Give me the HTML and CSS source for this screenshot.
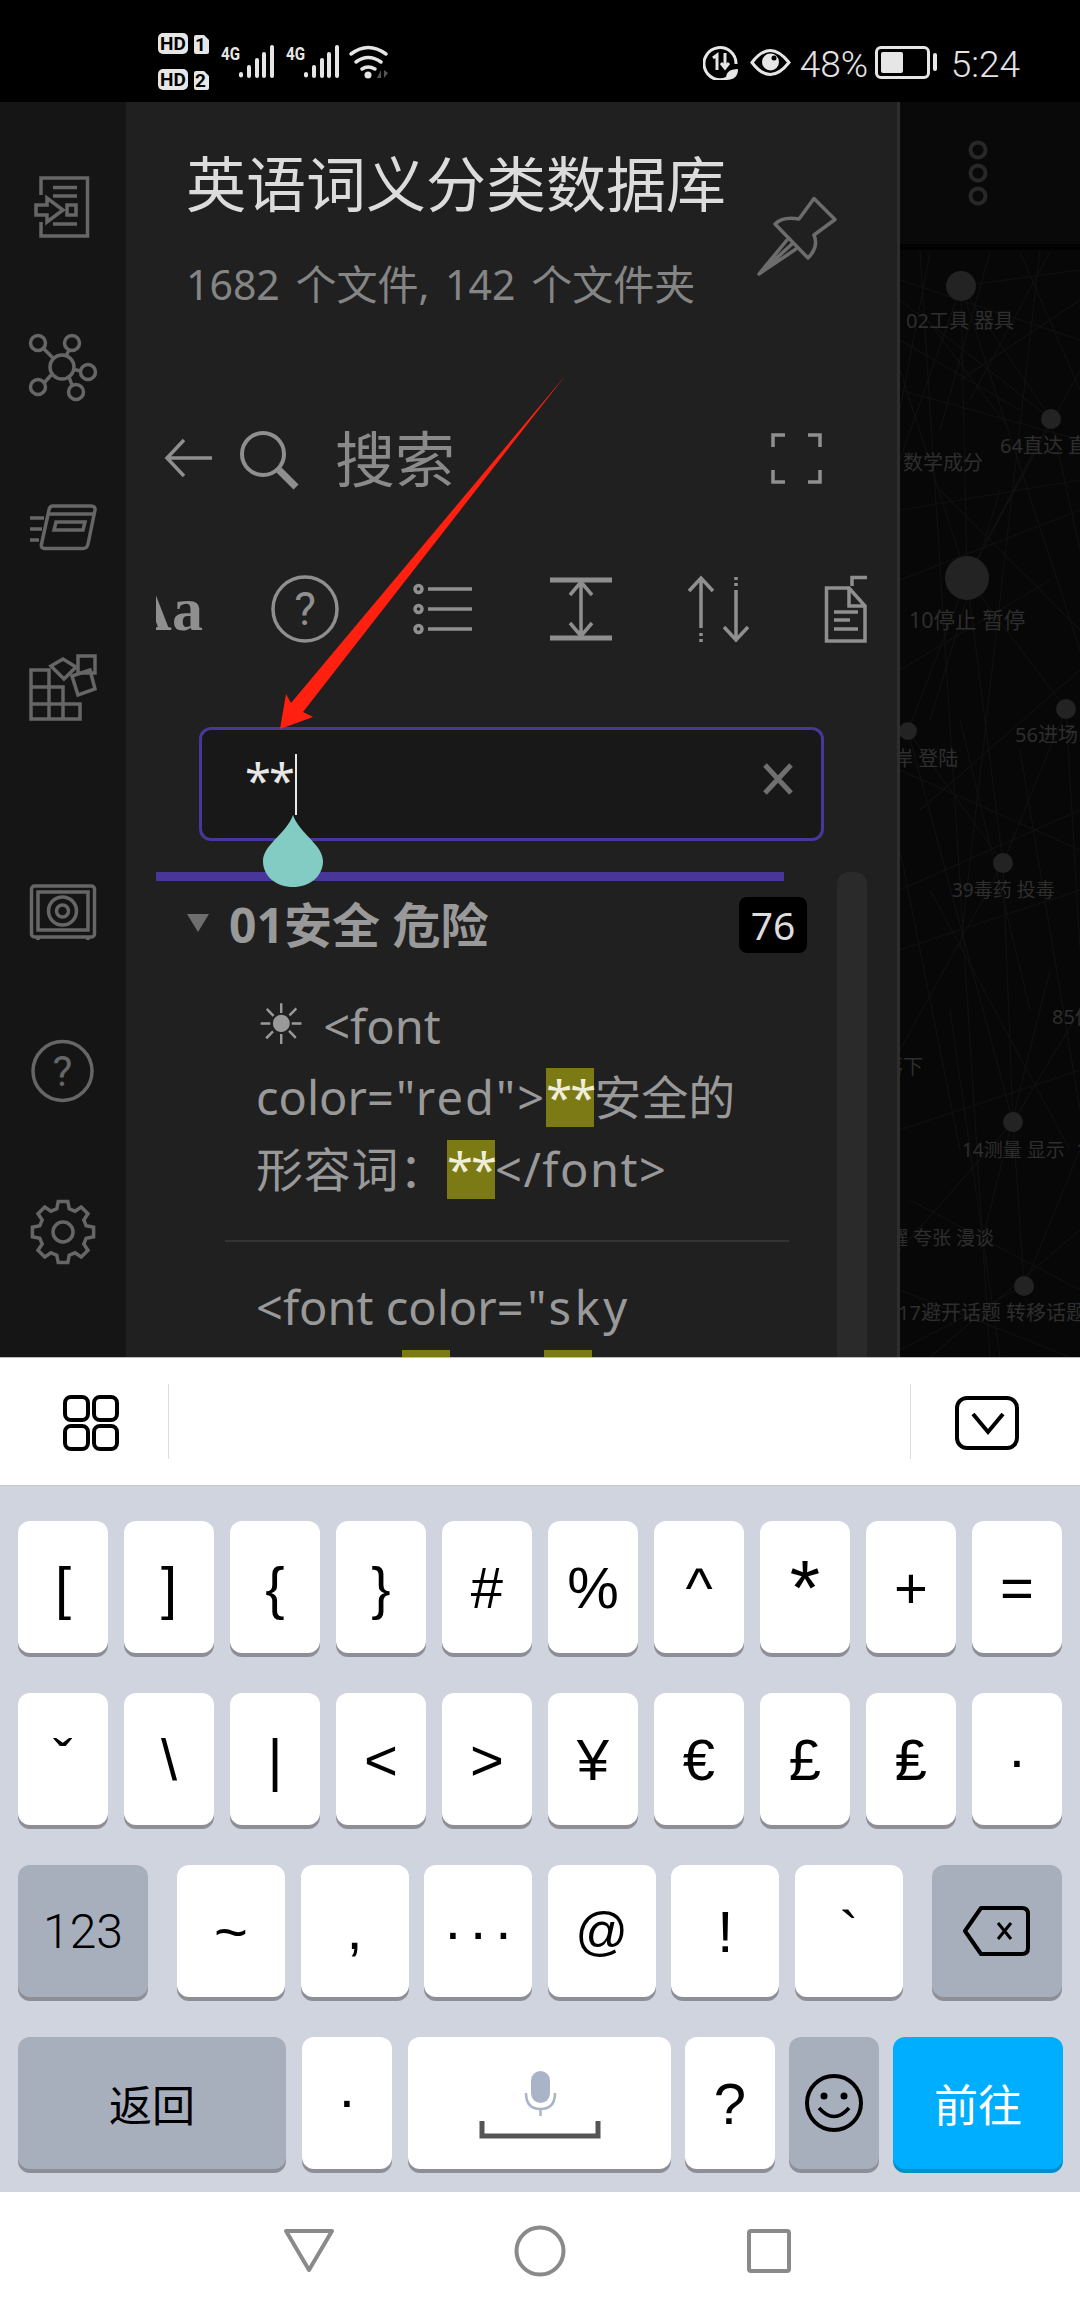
FILE: index.html
```html
<!DOCTYPE html>
<html lang="zh">
<head>
<meta charset="utf-8">
<title>英语词义分类数据库</title>
<link rel="stylesheet" href="styles.css">
</head>
<body>
<div class="phone">
  <header class="status">
    <svg class="st-left" viewBox="150 30 250 64" width="250" height="64">
      <g fill="#e6e6e6">
        <rect x="158" y="33" width="30" height="21" rx="5"/>
        <rect x="158" y="69" width="30" height="21" rx="5"/>
        <path d="M196 35h8l5 5v12a2 2 0 0 1-2 2h-11a2 2 0 0 1-2-2V37a2 2 0 0 1 2-2z"/>
        <path d="M196 71h8l5 5v12a2 2 0 0 1-2 2h-11a2 2 0 0 1-2-2V73a2 2 0 0 1 2-2z"/>
        <rect x="239" y="72" width="4" height="5.500" rx="2"/><rect x="247" y="65" width="4" height="13" rx="2"/><rect x="255" y="58" width="4" height="20" rx="2"/><rect x="262" y="52" width="4" height="26" rx="2"/><rect x="270" y="45" width="4" height="33" rx="2"/>
        <rect x="304" y="72" width="4" height="5.500" rx="2"/><rect x="312" y="65" width="4" height="13" rx="2"/><rect x="320" y="58" width="4" height="20" rx="2"/><rect x="327" y="52" width="4" height="26" rx="2"/><rect x="335" y="45" width="4" height="33" rx="2"/>
        <circle cx="368" cy="75" r="3.500"/>
      </g>
      <g class="st-tiny">
        <text x="173" y="50" text-anchor="middle" class="st-hd">HD</text>
        <text x="173" y="86" text-anchor="middle" class="st-hd">HD</text>
        <text x="200.500" y="51" text-anchor="middle" class="st-hd">1</text>
        <text x="200.500" y="87" text-anchor="middle" class="st-hd">2</text>
      </g>
      <text x="221" y="60" class="st-4g" textLength="19" lengthAdjust="spacingAndGlyphs">4G</text>
      <text x="286" y="60" class="st-4g" textLength="19" lengthAdjust="spacingAndGlyphs">4G</text>
      <g fill="none" stroke="#e6e6e6" stroke-width="3.500" stroke-linecap="round">
        <path d="M351 54q17-13 35 0"/><path d="M356 62q12-9 25 0"/><path d="M362 69q6-4 13 0"/>
      </g>
      <path d="M377 78l4-8v8zM384 70v8l4-5z" fill="#555"/>
    </svg>
    <div class="st-right">
      <svg viewBox="702 44 35 36" width="35" height="36">
        <path d="M726 78a16 16 0 1 1 9-14" fill="none" stroke="#e6e6e6" stroke-width="3"/>
        <path d="M712 58l4-3v15M724 53v14m-4-4l4 5 4-5" fill="none" stroke="#e6e6e6" stroke-width="3"/>
        <path d="M725 80q-1-11 12-11q0 11-12 11z" fill="#e6e6e6"/>
      </svg>
      <svg class="st-eye" viewBox="749 48 41 27" width="41" height="27">
        <path d="M751 61.500q18-24 37 0q-19 24-37 0z" fill="none" stroke="#e6e6e6" stroke-width="3"/>
        <circle cx="769.500" cy="61" r="8.500" fill="#e6e6e6"/><circle cx="773" cy="57" r="2.500" fill="#000"/>
      </svg>
      <span class="st-text st-pct">48%</span>
      <div class="battery"><div class="battery-fill"></div></div>
      <div class="battery-nub"></div>
      <span class="st-text st-time">5:24</span>
    </div>
  </header>

  <main class="app">
    <nav class="rail">
      <div class="rail-btn"><svg viewBox="30 174 62 66" width="62" height="66" class="ico-rail">
        <path d="M39 195V178H85.500V236H39V222"/><path d="M51 187.500H75M51 196H75M51 224H75"/><rect x="65" y="205" width="9" height="10"/><path d="M34 205H45V198L61 210L45 222V215H34Z"/>
      </svg></div>
      <div class="rail-btn"><svg viewBox="28 332 70 70" width="70" height="70" class="ico-rail">
        <circle cx="62" cy="367" r="12"/><circle cx="38" cy="343" r="7.500"/><circle cx="72" cy="343" r="7.500"/><circle cx="88" cy="372" r="7.500"/><circle cx="76" cy="392" r="7.500"/><circle cx="38" cy="387" r="7.500"/>
        <path d="M44 349L53 358M69 350L66 356M74 369.500L81 371M69 377L72 385M52 374L44 383"/>
      </svg></div>
      <div class="rail-btn"><svg viewBox="28 503 70 50" width="70" height="50" class="ico-rail">
        <path d="M53 507H91Q95.500 507 95 511L88 545Q87 549.500 83 549.500H45Q40.500 549.500 41.500 545L49 511Q49.500 507 53 507Z"/><path d="M49 515H93"/><path d="M56 523H85L83 531H54Z"/><path d="M30 519H44M30 530H42M30 541H39"/>
      </svg></div>
      <div class="rail-btn"><svg viewBox="28 652 70 71" width="70" height="71" class="ico-rail">
        <path d="M31 670H49V719H31ZM31 687H63V719M31 704H80V719H31M63 704V719"/><path d="M51 666L63 659L76 667L64 679Z"/><rect x="78" y="656" width="17" height="17"/><path d="M72 676L90 670L95 689L78 695Z"/>
      </svg></div>
      <div class="rail-gap"></div>
      <div class="rail-btn"><svg viewBox="29 883 68 58" width="68" height="58" class="ico-rail">
        <rect x="31.500" y="886" width="63" height="51" rx="3"/><rect x="38" y="892" width="50" height="38"/><circle cx="62.500" cy="911" r="14"/><circle cx="62.500" cy="911" r="6"/><path d="M38 938V940M88 938V940"/>
      </svg></div>
      <div class="rail-btn"><svg viewBox="30 1040 66 66" width="66" height="66" class="ico-rail">
        <circle cx="62.500" cy="1072" r="29.500"/><text x="62.500" y="1087" text-anchor="middle" class="ico-q">?</text>
      </svg></div>
      <div class="rail-btn"><svg viewBox="-33 -33 66 66" width="66" height="66" class="ico-rail">
        <polygon points="-6.200,-23.200 -4.800,-30.600 4.800,-30.600 6.200,-23.200 12,-20.800 18.200,-25 25,-18.200 20.800,-12 23.200,-6.200 30.600,-4.800 30.600,4.800 23.200,6.200 20.800,12 25,18.200 18.200,25 12,20.800 6.200,23.200 4.800,30.600 -4.800,30.600 -6.200,23.200 -12,20.800 -18.200,25 -25,18.200 -20.800,12 -23.200,6.200 -30.600,4.800 -30.600,-4.800 -23.200,-6.200 -20.800,-12 -25,-18.200 -18.200,-25 -12,-20.800"/><circle r="10"/>
      </svg></div>
    </nav>

    <section class="panel">
      <div class="vault">
        <div class="vault-text">
          <h1 class="vault-title">英语词义分类数据库</h1>
          <p class="vault-sub">1682 个文件, 142 个文件夹</p>
        </div>
        <svg class="pin" viewBox="758 193 82 82" width="82" height="82">
          <g fill="none" stroke="#6c6c6c" stroke-width="3.500" stroke-linejoin="round" stroke-linecap="round">
            <path d="M815 196.500L836 217.500L815 233Q820 245 809 256L776 222Q784 214 800 217Z"/>
            <path d="M788 238L760 272L797 247M793 242L760 272"/>
          </g>
        </svg>
      </div>

      <div class="search-head">
        <svg viewBox="163 436 52 44" width="52" height="44" class="ico-tool"><path d="M212 458H168M184 440L167 458L184 476"/></svg>
        <svg class="search-glass ico-tool" viewBox="236 426 64 64" width="64" height="64"><circle cx="263" cy="454" r="21" stroke-width="4"/><path d="M279 470L296 487" stroke-width="7"/></svg>
        <span class="search-label">搜索</span>
        <svg class="search-expand ico-tool" viewBox="770 431 55 55" width="55" height="55"><path d="M774 447V435H786M809 435H821V447M821 470V482H809M786 482H774V470"/></svg>
      </div>

      <div class="tools">
        <div class="tool tool-aa"><span class="aa">Aa</span></div>
        <div class="tool"><svg viewBox="270 574 70 70" width="70" height="70" class="ico-tool"><circle cx="305" cy="609" r="32"/><text x="305" y="625" text-anchor="middle" class="tool-q">?</text></svg></div>
        <div class="tool"><svg viewBox="410 580 66 58" width="66" height="58" class="ico-tool"><circle cx="418.500" cy="589" r="3.500"/><circle cx="418.500" cy="609" r="3.500"/><circle cx="418.500" cy="629" r="3.500"/><path d="M428 589H472M428 609H472M428 629H472"/></svg></div>
        <div class="tool"><svg viewBox="548 576 66 66" width="66" height="66" class="ico-tool"><path d="M550 580H612M550 638H612" stroke-width="5"/><path d="M581 582V636M570 595L581 582L592 595M570 623L581 636L592 623"/></svg></div>
        <div class="tool"><svg viewBox="686 574 66 70" width="66" height="70" class="ico-tool"><path d="M701 578V628M689 591L701 578L713 591M736 590V640M724 627L736 640L748 627M701 633V636M701 639V642M736 577V580M736 583V586"/></svg></div>
        <div class="tool"><svg viewBox="821 574 70 70" width="70" height="70" class="ico-tool"><path d="M825.500 588H848L864 606V641H825.500ZM848 588V606H864"/><path d="M833 612H857M833 620H849M833 629H857"/><path d="M851 586V577.500H867"/></svg></div>
      </div>

      <div class="query">
        <span class="query-text">**</span><span class="caret"></span>
        <svg class="handle" viewBox="0 0 60 72" width="60" height="72"><path d="M30 0C36 18 60 30 60 46C60 62 46 72 30 72C14 72 0 62 0 46C0 30 24 18 30 0Z" fill="#82ccc4"/></svg>
        <svg class="query-clear" viewBox="0 0 32 32" width="32" height="32"><path d="M3 2L29 30M29 2L3 30" fill="none" stroke="#707070" stroke-width="5"/></svg>
      </div>

      <div class="results">
        <div class="results-list">
          <div class="progress"></div>
          <div class="group-head">
            <span class="tri"></span>
            <span class="group-name">01安全 危险</span>
            <span class="badge">76</span>
          </div>
          <div class="match">
            <div class="match-line"><span class="sun">☀</span>&lt;font</div>
            <div class="match-line">color<span class="attr">="red"&gt;</span><mark class="hit">**</mark>安全的</div>
            <div class="match-line"><span class="cjk-wide">形容词：</span><mark class="hit">**</mark><span class="tag-wide">&lt;/font&gt;</span></div>
          </div>
          <div class="divider"></div>
          <div class="match match-next">
            <div class="match-line">&lt;font color<span class="attr-sky">="sky</span></div>
            <div class="match-line">blue"&gt;<mark class="hit hit-gap">**</mark>例句<mark class="hit">**</mark></div>
          </div>
        </div>
        <div class="scrollbar"></div>
      </div>
    </section>

    <aside class="graph-pane">
      <div class="graph-top">
        <svg viewBox="0 0 24 72" width="24" height="72"><g fill="none" stroke="#282828" stroke-width="4"><circle cx="12" cy="12" r="7.500"/><circle cx="12" cy="35" r="7.500"/><circle cx="12" cy="58" r="7.500"/></g></svg>
      </div>
      <div class="graph">
        <svg class="graph-lines" viewBox="0 0 180 1107" width="180" height="1107">
          <g stroke="#101010" stroke-width="1.200">
            <path d="M61 36L151 169M61 36L67 328M61 36L0 210M61 36L180 20M151 169L67 328M151 169L180 300M67 328L166 459M67 328L8 481M67 328L103 613M67 328L0 120M166 459L103 613M166 459L180 700M8 481L103 613M8 481L113 872M103 613L113 872M103 613L0 800M113 872L124 1036M113 872L180 760M113 872L0 1000M124 1036L0 1100M124 1036L180 900M151 169L0 50M61 36L180 400M67 328L180 120M0 640L180 560M20 0L90 1107M140 0L60 700M180 980L30 1107"/>
            <path d="M0 30L180 90M30 2L0 160M90 2L40 180M120 2L180 140M0 90L120 160M180 50L60 130M0 140L180 190M70 150L150 2M20 60L110 180M180 230L0 260M0 330L180 260M40 240L180 380M0 420L150 330M100 240L30 470M180 420L20 560M0 520L180 600M60 470L130 760M180 640L0 700M30 640L170 900M0 880L180 820M50 760L100 1107M180 1040L10 950M0 1040L170 1107M150 720L80 1000M0 600L60 900M120 500L180 860"/>
          </g>
        </svg>
        <i class="node" style="left:46px;top:21px;width:30px"></i>
        <i class="node" style="left:141px;top:159px;width:20px"></i>
        <i class="node" style="left:45px;top:306px;width:44px"></i>
        <i class="node" style="left:156px;top:449px;width:20px"></i>
        <i class="node" style="left:-1px;top:472px;width:18px"></i>
        <i class="node" style="left:93px;top:603px;width:20px"></i>
        <i class="node" style="left:103px;top:862px;width:20px"></i>
        <i class="node" style="left:114px;top:1026px;width:20px"></i>
        <span class="glabel" style="left:6px;top:58px">02工具 器具</span>
        <span class="glabel" style="left:100px;top:183px">64直达 直达</span>
        <span class="glabel" style="left:3px;top:200px">数学成分</span>
        <span class="glabel glabel-lg" style="left:9px;top:357px">10停止 暂停</span>
        <span class="glabel" style="left:115px;top:472px">56进场</span>
        <span class="glabel" style="left:-27px;top:496px">上岸 登陆</span>
        <span class="glabel glabel-sm" style="left:52px;top:627px">39毒药 投毒</span>
        <span class="glabel" style="left:152px;top:754px">85低</span>
        <span class="glabel" style="left:-17px;top:804px">落下</span>
        <span class="glabel glabel-sm" style="left:62px;top:887px">14测量 显示</span>
        <span class="glabel" style="left:176px;top:887px">1</span>
        <span class="glabel glabel-sm" style="left:-30px;top:975px">炫耀 夸张 漫谈</span>
        <span class="glabel" style="left:-2px;top:1050px">17避开话题 转移话题 转</span>
      </div>
    </aside>
  </main>

  <div class="kb-bar">
    <svg viewBox="63 1395 56 56" width="56" height="56"><g fill="none" stroke="#000" stroke-width="4"><rect x="65" y="1397" width="23" height="23" rx="6"/><rect x="94" y="1397" width="23" height="23" rx="6"/><rect x="65" y="1426" width="23" height="23" rx="6"/><rect x="94" y="1426" width="23" height="23" rx="6"/></g></svg>
    <div class="kb-sep"></div>
    <div class="kb-spacer"></div>
    <div class="kb-sep"></div>
    <svg viewBox="955 1395 65 54" width="65" height="54"><rect x="957" y="1397" width="60" height="50" rx="10" fill="none" stroke="#000" stroke-width="4"/><path d="M973 1413L988 1431L1003 1413" fill="none" stroke="#000" stroke-width="4"/></svg>
  </div>

  <div class="keyboard">
    <div class="kb-row">
      <div class="key">[</div><div class="key">]</div><div class="key">{</div><div class="key">}</div><div class="key">#</div><div class="key">%</div><div class="key">^</div><div class="key key-star">*</div><div class="key">+</div><div class="key">=</div>
    </div>
    <div class="kb-row">
      <div class="key">ˇ</div><div class="key">\</div><div class="key">|</div><div class="key">&lt;</div><div class="key">&gt;</div><div class="key">¥</div><div class="key">€</div><div class="key">£</div><div class="key">₤</div><div class="key">·</div>
    </div>
    <div class="kb-row kb-row3">
      <div class="key key-fn key-side key-num">123</div>
      <div class="key key-mid">~</div><div class="key key-mid key-comma">,</div><div class="key key-mid key-dots">···</div><div class="key key-mid key-at">@</div><div class="key key-mid">!</div><div class="key key-mid">`</div>
      <div class="key key-fn key-side">
        <svg viewBox="962 1908 70 52" width="70" height="52"><path d="M981 1911H1022Q1028 1911 1028 1917V1951Q1028 1957 1022 1957H981L965 1934Z" fill="none" stroke="#000" stroke-width="4" stroke-linejoin="round"/><path d="M998 1926L1011 1942M1011 1926L998 1942" fill="none" stroke="#000" stroke-width="3"/></svg>
      </div>
    </div>
    <div class="kb-row kb-row4">
      <div class="key key-fn key-back">返回</div>
      <div class="key key-dot">·</div>
      <div class="key key-space">
        <svg viewBox="478 2066 124 76" width="124" height="76"><rect x="531" y="2070" width="19" height="32" rx="9.500" fill="#aab4c8"/><path d="M526 2092Q526 2108 540.500 2108Q555 2108 555 2092M540.500 2108V2115" fill="none" stroke="#aab4c8" stroke-width="2.500"/><path d="M482 2120V2135H598V2120" fill="none" stroke="#555" stroke-width="5"/></svg>
      </div>
      <div class="key">?</div>
      <div class="key key-fn">
        <svg viewBox="0 0 60 60" width="60" height="60"><g fill="none" stroke="#000" stroke-width="4"><circle cx="30" cy="30" r="27"/><path d="M15 35Q30 52 45 35" stroke-width="3.500"/></g><circle cx="20" cy="23" r="3.500"/><circle cx="40" cy="23" r="3.500"/></svg>
      </div>
      <div class="key key-go">前往</div>
    </div>
  </div>

  <footer class="navbar">
    <svg viewBox="282 2229 54 46" width="54" height="46"><path d="M286 2232H332L309 2271Z" fill="none" stroke="#8a8a8a" stroke-width="4" stroke-linejoin="round"/></svg>
    <svg viewBox="513 2224 54 54" width="54" height="54"><circle cx="540" cy="2251" r="23.500" fill="none" stroke="#8a8a8a" stroke-width="4"/></svg>
    <svg viewBox="745 2226 48 48" width="48" height="48"><rect x="749" y="2230" width="40" height="40" rx="2" fill="none" stroke="#8a8a8a" stroke-width="4"/></svg>
  </footer>

  <svg class="annotation" viewBox="0 0 1080 2310" width="1080" height="2310">
    <polygon points="565,376 303,712 313,717 280,729 286,694 291,703" fill="#ff2010"/>
  </svg>
</div>
</body>
</html>
```
FILE: styles.css
```css
* { box-sizing: border-box; }
html, body { margin: 0; padding: 0; background: #000; }
body { font-family: "Noto Sans", "Noto Sans CJK SC", sans-serif; }
.phone { position: relative; width: 1080px; height: 2310px; display: flex; flex-direction: column; overflow: hidden; }

/* status bar */
.status { height: 102px; flex: none; background: #000; display: flex; align-items: flex-start; padding: 30px 60px 0 150px; justify-content: space-between; }
.st-hd { font: 700 19px Roboto, sans-serif; fill: #000; }
.st-4g { font: 700 18px Roboto, sans-serif; fill: #e6e6e6; }
.st-right { display: flex; align-items: center; height: 64px; }
.st-right svg { display: block; flex: none; }
.st-eye { margin-left: 12px; }
.st-text { color: #e4e4e4; font: 300 37px/64px Roboto, sans-serif; padding-top: 5px; }
.st-pct { margin-left: 9px; width: 67px; }
.st-time { margin-left: 14px; }
.battery { width: 55px; height: 33px; margin-left: 8px; border: 3px solid #e6e6e6; border-radius: 6px; padding: 3px; }
.battery-fill { width: 22px; height: 21px; background: #e6e6e6; border-radius: 2px; }
.battery-nub { width: 4px; height: 18px; margin-left: 3px; background: #e6e6e6; border-radius: 2px; }

/* app */
.app { height: 1255px; flex: none; display: flex; overflow: hidden; }
.rail { width: 126px; flex: none; background: #151515; padding-top: 25px; display: flex; flex-direction: column; align-items: center; }
.rail-btn { height: 160px; flex: none; display: flex; align-items: center; justify-content: center; }
.rail-gap { height: 65px; flex: none; }
.ico-rail { fill: none; stroke: #666; stroke-width: 3.5; display: block; }
.ico-q { font: 400 42px Roboto, sans-serif; fill: #666; stroke: none; }

.panel { width: 774px; flex: none; background: #202020; border-right: 3px solid #2e2e2e; overflow: hidden; }
.vault { display: flex; justify-content: space-between; padding: 39px 58px 0 60px; height: 215px; }
.vault-title { margin: 0; font: 400 60px/80px "Noto Sans CJK SC", sans-serif; color: #dcdcdc; }
.vault-sub { margin: 33px 0 0; font: 400 41px/60px "Noto Sans", "Noto Sans CJK SC", sans-serif; color: #858585; word-spacing: 5px; }
.pin { margin-top: 54px; flex: none; }

.search-head { display: flex; align-items: center; height: 80px; margin-top: 101px; padding-left: 37px; }
.ico-tool { fill: none; stroke: #8f8f8f; stroke-width: 3.5; display: block; flex: none; }
.search-glass { margin-left: 21px; stroke: #8f8f8f; }
.search-label { margin-left: 35px; padding-bottom: 5px; font: 400 60px/76px "Noto Sans CJK SC", sans-serif; color: #8a8a8a; }
.search-expand { margin-left: 314px; }

.tools { display: flex; height: 78px; width: 711px; margin: 72px 0 0 30px; overflow: hidden; }
.tool { flex: 0 0 138px; display: flex; align-items: center; justify-content: center; height: 78px; }
.tool-aa { margin-left: -60px; margin-right: 2px; }
.aa { font: 700 62px/78px "Liberation Serif", serif; color: #8f8f8f; }
.tool-q { font: 400 46px Roboto, sans-serif; fill: #8f8f8f; stroke: none; }

.query { position: relative; display: flex; align-items: flex-start; width: 625px; height: 114px; margin: 79px 0 0 73px; background: #181818; border: 3px solid #483699; border-radius: 12px; padding: 24px 0 0 43px; z-index: 2; }
.query-text { font: 400 47px/52px "Noto Sans", sans-serif; color: #e8e8e8; letter-spacing: -2px; }
.caret { width: 2px; height: 61px; margin-left: 2px; background: #e8e8e8; }
.handle { position: absolute; left: 61px; top: 85px; }
.query-clear { position: absolute; right: 27px; top: 33px; }

.results { display: flex; margin: 31px 0 0 30px; }
.results-list { width: 681px; flex: none; }
.progress { width: 628px; height: 9px; background: #483699; }
.group-head { display: flex; align-items: center; height: 88px; padding-left: 31px; position: relative; }
.tri { width: 0; height: 0; border-left: 11px solid transparent; border-right: 11px solid transparent; border-top: 18px solid #6e6e6e; margin-top: -4px; }
.group-name { margin-left: 20px; font: 700 48px/60px "Noto Sans", "Noto Sans CJK SC", sans-serif; color: #999; }
.badge { margin-left: auto; margin-right: 30px; width: 68px; height: 56px; background: #000; border-radius: 8px; color: #ddd; font: 400 39px/56px "Noto Sans", sans-serif; text-align: center; }
.match { margin: 20px 0 0; padding-left: 100px; font: 400 47px/72px "Noto Sans", "Noto Sans CJK SC", sans-serif; color: #999; white-space: nowrap; }
.match-line { height: 72px; line-height: 72px; }
.sun { font-family: "DejaVu Sans", sans-serif; font-size: 56px; margin-right: 17px; }
.attr { letter-spacing: 2.1px; }
.attr-sky { letter-spacing: 3.6px; }
.cjk-wide { letter-spacing: 0.75px; }
.tag-wide { letter-spacing: 1.5px; }
.hit { display: inline-block; width: 48px; height: 59px; line-height: 59px; background: #7c7a14; color: #efefd8; font-family: "Noto Sans", sans-serif; letter-spacing: -2px; vertical-align: baseline; }
.hit-gap { margin-left: 4px; }
.divider { height: 2px; width: 564px; margin: 35px 0 0 69px; background: #333; }
.match-next { margin-top: 29px; }
.scrollbar { width: 30px; height: 500px; background: #2a2a2a; border-radius: 12px 12px 0 0; flex: none; }

/* graph */
.graph-pane { flex: 1; min-width: 0; background: #070707; display: flex; flex-direction: column; overflow: hidden; }
.graph-top { height: 148px; flex: none; background: #090909; display: flex; justify-content: center; padding: 0 24px 0 0; border-bottom: 6px solid #020202; }
.graph-top svg { margin: 36px 0 0 0; }
.graph { position: relative; flex: 1; }
.graph-lines { position: absolute; left: 0; top: 0; }
.node { position: absolute; aspect-ratio: 1; border-radius: 50%; background: #232323; }
.glabel { position: absolute; font: 400 20px/26px "Noto Sans", "Noto Sans CJK SC", sans-serif; color: #2e2e2e; white-space: nowrap; }
.glabel-lg { font-size: 21.5px; }
.glabel-sm { font-size: 19px; }

/* keyboard top bar */
.kb-bar { height: 129px; flex: none; background: #fff; border-top: 1px solid #bbb; border-bottom: 1px solid #c4c6cc; display: flex; align-items: center; padding-left: 63px; }
.kb-bar svg { display: block; flex: none; margin-top: 3px; }
.kb-sep { width: 1px; height: 75px; background: #ddd; margin-left: 49px; flex: none; }
.kb-spacer { width: 741px; flex: none; }
.kb-bar .kb-sep + .kb-spacer + .kb-sep { margin-left: 0; }
.kb-bar .kb-sep + .kb-spacer + .kb-sep + svg { margin-left: 44px; }

/* keyboard */
.keyboard { height: 706px; flex: none; background: #d0d4de; padding: 35px 18px 0; display: flex; flex-direction: column; gap: 40px; }
.kb-row { display: flex; gap: 16px; height: 132px; }
.key { width: 90px; height: 132px; flex: none; background: #fff; border-radius: 12px; box-shadow: 0 4px 0 #8e8e96; display: flex; align-items: center; justify-content: center; color: #000; font: 400 58px "Liberation Sans", "Noto Sans CJK SC", sans-serif; }
.key svg { display: block; }
.key-star { font-size: 78px; padding-top: 2px; }
.key-at { font-size: 52px; }
.key-dots { letter-spacing: 6px; padding-left: 6px; }
.key-comma { padding-bottom: 6px; }
.key-dot { padding-bottom: 8px; }
.key-fn { background: #a8afbc; }
.kb-row3 { gap: 15.6px; }
.key-side { width: 130px; }
.key-num { font: 300 48px Roboto, sans-serif; }
.key-mid { width: 108px; }
.kb-row3 .key-side:first-child { margin-right: 13.400px; }
.kb-row3 .key-side:last-child { margin-left: 13.400px; }
.kb-row4 { gap: 16px; }
.key-back { width: 268px; font: 400 43px "Noto Sans CJK SC", sans-serif; }
.key-space { width: 263px; align-items: flex-start; padding-top: 30px; }
.key-space + .key { margin-left: -2px; }
.key-space + .key + .key { margin-left: -2px; }
.key-go { width: 170px; margin-left: -2px; background: #00aeff; box-shadow: 0 4px 0 #0090c8; color: #fff; font: 400 44px "Noto Sans CJK SC", sans-serif; }

/* navigation */
.navbar { flex: 1; background: #fff; position: relative; display: flex; align-items: center; padding: 0 0 0 282px; }
.navbar svg { display: block; flex: none; }
.navbar svg:nth-child(2) { margin-left: 177px; }
.navbar svg:nth-child(3) { margin-left: 178px; }

.annotation { position: absolute; left: 0; top: 0; pointer-events: none; z-index: 5; }
```
